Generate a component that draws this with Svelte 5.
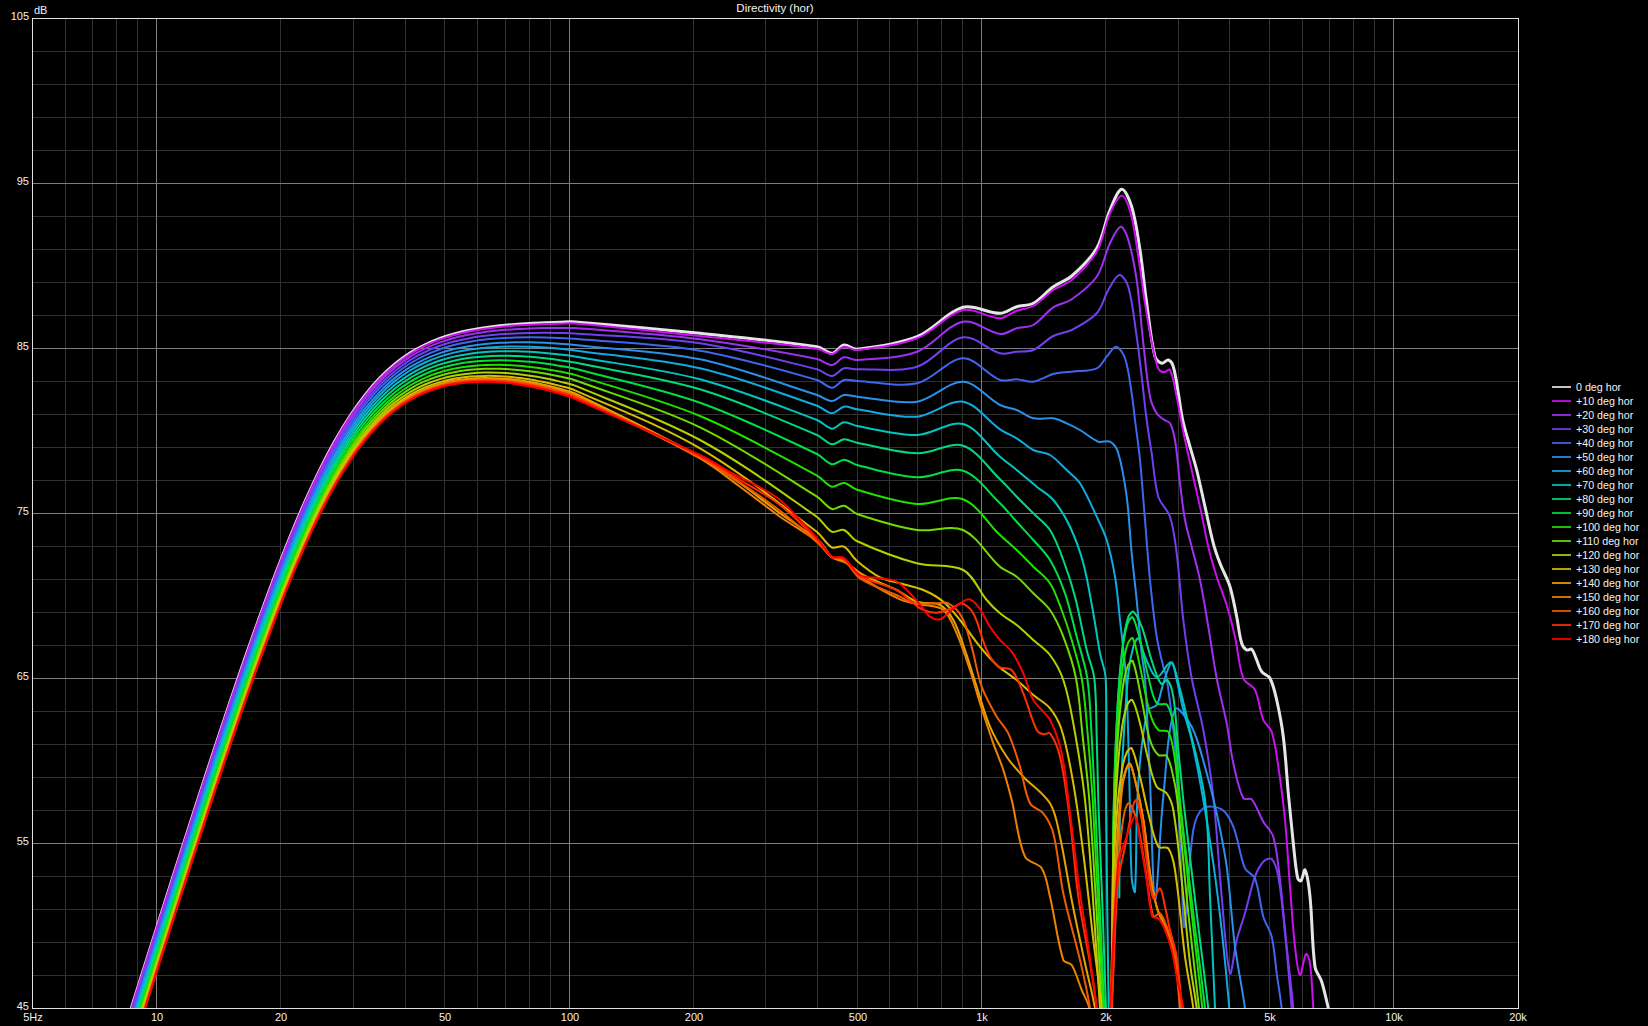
<script>
  // plot geometry, in page pixels
  const LEFT = 32, RIGHT = 1518, TOP = 18, BOTTOM = 1008;
  const fx = (f) => Math.round(156.3 + 412.3 * Math.log10(f / 10));
  const dy = (db) => Math.round(TOP + (105 - db) * 16.5);

  const majorF = [10, 100, 1000, 10000];
  const minorF = [6, 7, 8, 9, 20, 30, 40, 50, 60, 70, 80, 90, 200, 300, 400, 500, 600, 700, 800, 900,
    2000, 3000, 4000, 5000, 6000, 7000, 8000, 9000];
  const majorDb = [95, 85, 75, 65, 55];
  const minorDb = [];
  for (let d = 47; d < 105; d += 2) if (!majorDb.includes(d)) minorDb.push(d);

  const dbLabels = [105, 95, 85, 75, 65, 55, 45];
  const hzLabels = [[5, '5Hz'], [10, '10'], [20, '20'], [50, '50'], [100, '100'], [200, '200'], [500, '500'],
    [1000, '1k'], [2000, '2k'], [5000, '5k'], [10000, '10k'], [20000, '20k']];

  // the traces were read off enlarged crops, so each block is in crop units (3x from an origin)
  const crop = (x0, y0) => (...n) => {
    const out = [];
    for (let i = 0; i < n.length; i += 2) out.push([x0 + n[i] / 3, y0 + n[i + 1] / 3]);
    return out;
  };
  const z7 = crop(700, 300), z10 = crop(880, 570), z4 = crop(1000, 170), z5 = crop(1000, 420);
  const z6 = crop(1000, 680), z11 = crop(1090, 600);

  // shared bass slope (two cascaded 2nd order high-passes), the angles only shift it down
  const section = (xc, x) => Math.log10(1 + 10 ** ((4 * (xc - x)) / 412.3));
  const baseY = (x) => 321 + 165 * (section(363, x) + section(328, x));
  const spread = (x) => 44 + 10 * (Math.max(x - 130, 0) / 354) ** 5.2;
  const bass = (k) => {
    const out = [];
    for (let x = 110; x <= 575; x += 15) out.push([x, baseY(x) + k * spread(x)]);
    return out;
  };

  const cols = [700, 817, 832, 844, 857, 917, 963, 1000];
  const mid = (...ys) => ys.map((v, i) => [cols[i], 300 + v / 3]);

  // rising side of the lobe behind the 2 kHz null
  const lobe = (xp, yp) => {
    const xb = 1111.7;
    const steps = [[0, 0], [0.1, 0.52], [0.29, 0.78], [0.52, 0.92], [0.76, 0.985], [1, 1]];
    return [[xb - 1.5, 1060], ...steps.map(([a, t]) => [xb + a * (xp - xb), 1008 - t * (1008 - yp)])];
  };

  const traces = [
    { label: '0 deg hor', color: '#e6e6e6', width: 3, pts: [...bass(0),
      ...mid(100, 140, 160, 135, 148, 110, 22, 40),
      ...z4(50, 410, 100, 400, 160, 350, 215, 318, 290, 235, 330, 120, 365, 58, 395, 110, 420, 240, 440, 400, 465, 560, 485, 580, 505, 570, 520, 590, 535, 670),
      ...z5(548, 0, 570, 80, 590, 150, 615, 260, 640, 370, 660, 430, 690, 500, 710, 590, 725, 670, 740, 690, 755, 688, 770, 720, 785, 755, 810, 775),
      ...z6(830, 60, 850, 170, 865, 340, 880, 490, 893, 595, 903, 602, 915, 570, 930, 650, 945, 860, 965, 905, 985, 985, 1000, 1060)] },
    { label: '+10 deg hor', color: '#cc10f0', pts: [...bass(0.02),
      ...mid(108, 146, 162, 140, 150, 115, 30, 55),
      ...z4(50, 422, 100, 408, 160, 360, 215, 330, 290, 245, 330, 130, 365, 77, 392, 130, 415, 260, 435, 400, 460, 540, 475, 595, 490, 607, 510, 600, 530, 680),
      ...z5(543, 0, 555, 60, 575, 150, 600, 260, 625, 380, 650, 470, 680, 555, 705, 650, 730, 775),
      ...z6(765, 30, 790, 120, 815, 155, 835, 260, 855, 420, 870, 620, 885, 800, 900, 885, 918, 822, 930, 850, 940, 985, 945, 1060)] },
    { label: '+20 deg hor', color: '#a030f0', pts: [...bass(0.08),
      ...mid(118, 177, 195, 172, 180, 155, 65, 102),
      ...z4(50, 475, 100, 465, 160, 412, 215, 388, 290, 320, 330, 220, 362, 170, 385, 210, 410, 330, 430, 520, 450, 680, 470, 730, 490, 748),
      ...z5(510, 10, 525, 60, 540, 190, 555, 300, 575, 380, 600, 480, 625, 620, 650, 775),
      ...z6(680, 130, 700, 250, 730, 355, 755, 358, 790, 425, 820, 470, 840, 600, 860, 800, 880, 985, 885, 1060)] },
    { label: '+30 deg hor', color: '#7040f0', pts: [...bass(0.15),
      ...mid(130, 208, 228, 205, 208, 200, 112, 160),
      ...z4(50, 545, 100, 540, 160, 498, 215, 480, 290, 430, 325, 360, 358, 315, 385, 350, 410, 500, 425, 620, 440, 750),
      ...z5(455, 100, 475, 230, 510, 290, 530, 400, 550, 600, 575, 775),
      ...z6(610, 150, 640, 350, 665, 650, 690, 880, 710, 780, 735, 700, 765, 590, 790, 545, 815, 537, 835, 590, 855, 760, 875, 985, 880, 1060)] },
    { label: '+40 deg hor', color: '#3f66f0', pts: [...bass(0.22),
      ...mid(152, 240, 263, 240, 243, 250, 175, 240),
      ...z4(50, 628, 100, 635, 160, 612, 215, 605, 290, 595, 320, 560, 348, 530, 375, 565, 395, 670, 405, 750),
      ...z5(420, 120, 435, 300, 450, 480, 470, 650, 490, 740, 500, 775),
      ...z6(525, 200, 545, 600, 553, 740, 580, 450, 610, 385, 665, 388, 700, 440, 735, 565, 765, 595, 790, 710, 815, 770, 830, 880, 845, 985, 850, 1060)] },
    { label: '+50 deg hor', color: '#2a90ea', pts: [...bass(0.3),
      ...mid(178, 285, 303, 285, 290, 305, 245, 315),
      ...z4(50, 720, 100, 745, 160, 745, 200, 760),
      ...z5(240, 30, 295, 65, 330, 65, 355, 100, 380, 230, 395, 400, 410, 540, 425, 700, 435, 775),
      ...z6(450, 300, 465, 660, 490, 350, 525, 88, 575, 140, 615, 260, 650, 400, 680, 560, 705, 800, 735, 985, 740, 1060)] },
    { label: '+60 deg hor', color: '#10aade', pts: [...bass(0.37),
      ...mid(205, 317, 340, 320, 328, 350, 305, 388),
      ...z5(50, 55, 100, 90, 150, 105, 200, 150, 240, 190, 290, 290, 320, 360, 345, 470, 360, 600, 378, 775),
      ...z6(388, 300, 395, 595, 405, 635, 412, 360, 425, 200, 445, 90, 470, 75, 490, 10, 515, -53, 530, 0, 550, 90, 575, 180, 610, 360, 640, 550, 665, 750, 688, 985, 692, 1060)] },
    { label: '+70 deg hor', color: '#00c6c0', pts: [...bass(0.45),
      ...mid(238, 360, 386, 367, 378, 405, 372, 470),
      ...z5(50, 150, 110, 200, 160, 240, 210, 320, 250, 430, 280, 580, 300, 700, 317, 775),
      ...z6(318, 330, 322, 700, 326, 985, 330, 1060), null,
      ...z6(358, 655, 360, 400, 370, 190, 385, -20),
      ...z11(130, 140, 145, 115, 165, 170, 200, 232, 243, 187, 268, 260, 290, 350, 345, 600),
      ...z6(630, 650, 645, 985, 650, 1060)] },
    { label: '+80 deg hor', color: '#00da80', pts: [...bass(0.53),
      ...mid(268, 405, 433, 418, 428, 460, 437, 538),
      ...z5(50, 230, 100, 280, 150, 330, 190, 420, 225, 530, 260, 690, 283, 775),
      ...z6(290, 170, 295, 360, 308, 700, 318, 985, 322, 1060), null,
      ...lobe(1133.3, 611.7),
      ...z11(155, 80, 180, 165, 200, 225, 215, 252, 232, 240, 250, 290, 265, 450, 280, 600),
      ...z6(590, 700, 625, 985, 630, 1060)] },
    { label: '+90 deg hor', color: '#00e040', pts: [...bass(0.61),
      ...mid(308, 462, 493, 479, 495, 532, 512, 610),
      ...z5(50, 305, 100, 360, 150, 420, 195, 520, 230, 650, 262, 775),
      ...z6(275, 170, 285, 360, 300, 700, 313, 985, 318, 1060), null,
      ...lobe(1132.7, 617.3),
      ...z11(150, 120, 175, 230, 200, 310, 232, 315, 255, 400, 270, 600),
      ...z6(580, 700, 615, 985, 620, 1060)] },
    { label: '+100 deg hor', color: '#20e000', pts: [...bass(0.69),
      ...mid(348, 527, 560, 549, 569, 612, 598, 705),
      ...z5(50, 390, 100, 440, 150, 490, 185, 570, 215, 660, 245, 775),
      ...z6(262, 150, 278, 360, 296, 700, 310, 985, 314, 1060), null,
      ...lobe(1132.7, 638.3),
      ...z11(150, 200, 180, 340, 205, 390, 235, 395, 255, 480, 268, 600),
      ...z6(575, 700, 607, 985, 612, 1060)] },
    { label: '+110 deg hor', color: '#70dd00', pts: [...bass(0.76),
      ...mid(382, 590, 627, 617, 642, 690, 690, 800),
      ...z5(50, 470, 100, 520, 150, 570, 190, 650, 228, 775),
      ...z6(248, 170, 268, 360, 290, 700, 305, 985, 309, 1060), null,
      ...lobe(1132.7, 661),
      ...z11(155, 300, 180, 420, 205, 465, 230, 468, 250, 530, 262, 600),
      ...z6(565, 700, 597, 985, 602, 1060)] },
    { label: '+120 deg hor', color: '#b4d200', pts: [...bass(0.83),
      ...z7(0, 420, 350, 650, 395, 695, 432, 690, 470, 723, 650, 790, 790, 810, 860, 900),
      ...z5(0, 580, 50, 615, 100, 660, 150, 705),
      ...z6(190, 0, 220, 130, 255, 360, 282, 700, 300, 985, 304, 1060), null,
      ...lobe(1132.3, 700),
      ...z6(420, 130, 445, 240, 470, 320, 500, 340, 520, 390, 545, 600, 570, 850, 590, 985, 595, 1060)] },
    { label: '+130 deg hor', color: '#d8c000', pts: [...bass(0.89),
      ...z7(0, 445, 350, 695, 395, 742, 432, 740, 470, 782),
      ...z10(0, 22, 60, 40, 130, 60, 190, 95, 240, 150, 300, 230, 350, 285),
      ...z6(50, 0, 100, 45, 150, 85, 185, 150, 220, 310, 250, 520, 280, 780, 305, 985, 309, 1060), null,
      ...lobe(1131.7, 748.3),
      ...z6(420, 290, 445, 400, 475, 500, 505, 505, 525, 570, 555, 830, 580, 985, 585, 1060)] },
    { label: '+140 deg hor', color: '#e8a400', pts: [...bass(0.93),
      ...z7(0, 470, 120, 550, 240, 640, 360, 725, 395, 770, 435, 785, 490, 825),
      ...z10(50, 60, 110, 95, 180, 105, 220, 150, 255, 240, 290, 350, 330, 470, 380, 560, 430, 620),
      ...z6(150, 370, 180, 470, 215, 660, 255, 850, 285, 985, 290, 1060), null,
      ...z6(326, 1060, 330, 985, 345, 600, 365, 320, 388, 250, 405, 300, 430, 420, 450, 580, 470, 680, 495, 740, 525, 830, 545, 985, 550, 1060)] },
    { label: '+150 deg hor', color: '#f08200', pts: [...bass(0.95),
      ...z7(0, 475, 120, 560, 240, 650, 360, 730, 395, 772, 440, 790, 490, 835),
      ...z10(60, 88, 120, 103, 190, 120, 230, 190, 270, 300, 300, 400, 340, 520, 370, 600, 395, 690),
      ...z6(75, 530, 125, 565, 150, 650, 190, 840, 215, 855, 245, 930, 268, 985, 272, 1060), null,
      ...z6(328, 1060, 332, 985, 347, 600, 367, 322, 388, 253, 406, 303, 431, 425, 451, 585, 471, 685, 496, 745, 526, 835, 546, 985, 551, 1060)] },
    { label: '+160 deg hor', color: '#f05c00', pts: [...bass(0.97),
      ...z7(0, 472, 100, 535, 240, 632, 360, 735, 395, 772, 430, 778, 480, 835),
      ...z10(60, 80, 100, 100, 170, 100, 205, 100, 245, 140, 275, 230, 305, 350, 350, 440, 385, 490, 420, 590),
      ...z6(90, 370, 130, 400, 160, 460, 190, 640, 240, 840, 270, 985, 274, 1060), null,
      ...z6(330, 1060, 335, 985, 350, 650, 365, 450, 385, 370, 410, 420, 435, 560, 460, 710, 480, 700, 500, 740, 520, 800, 540, 985, 545, 1060)] },
    { label: '+170 deg hor', color: '#ff3000', pts: [...bass(0.98),
      ...z7(0, 468, 100, 528, 240, 615, 360, 728, 395, 771, 430, 776, 480, 828),
      ...z10(50, 60, 100, 100, 130, 120, 170, 128, 215, 115, 245, 100, 280, 130, 320, 240, 355, 290, 395, 300, 430, 370, 470, 480, 490, 493),
      ...z6(150, 160, 180, 230, 210, 420, 235, 650, 270, 850, 290, 985, 294, 1060), null,
      ...z6(330, 1060, 335, 985, 352, 620, 375, 500, 400, 375, 410, 360, 425, 420, 440, 540, 460, 655, 480, 625, 495, 680, 510, 750, 530, 830, 545, 985, 550, 1060)] },
    { label: '+180 deg hor', color: '#ff0000', pts: [...bass(1),
      ...z7(0, 465, 100, 522, 180, 562, 240, 600, 300, 660, 360, 725, 395, 770, 430, 773, 480, 825),
      ...z10(0, 25, 50, 35, 90, 70, 125, 110, 150, 140, 180, 148, 215, 120, 265, 88, 295, 110, 330, 170, 360, 210, 395, 245, 430, 310, 460, 390, 510, 450),
      ...z6(185, 220, 210, 400, 240, 640, 265, 800, 290, 985, 294, 1060), null,
      ...z6(326, 1060, 330, 985, 355, 550, 380, 470, 405, 410, 420, 480, 440, 600, 457, 710, 475, 715, 495, 750, 515, 810, 530, 890, 550, 985, 555, 1060)] }
  ];

  const dist = (p, q) => Math.hypot(q[0] - p[0], q[1] - p[1]) || 1;

  // slope at b, weighted by chord length so uneven point spacing can't loop back
  const tangent = (a, b, c) => {
    const len = dist(a, b) + dist(b, c);
    return [(c[0] - a[0]) / len, (c[1] - a[1]) / len];
  };

  // spline through the points, broken where a trace leaves the plot
  function toPath(pts) {
    const runs = [[]];
    for (const p of pts) {
      if (p === null) runs.push([]);
      else runs[runs.length - 1].push(p);
    }
    let d = '';
    for (const run of runs) {
      d += `M${run[0][0].toFixed(1)} ${run[0][1].toFixed(1)}`;
      for (let i = 0; i < run.length - 1; i++) {
        const a = run[Math.max(i - 1, 0)], b = run[i], c = run[i + 1], e = run[Math.min(i + 2, run.length - 1)];
        const h = dist(b, c) / 1.5;
        const t1 = tangent(a, b, c), t2 = tangent(b, c, e);
        const c1 = [b[0] + (t1[0] * h) / 2, b[1] + (t1[1] * h) / 2];
        const c2 = [c[0] - (t2[0] * h) / 2, c[1] - (t2[1] * h) / 2];
        d += `C${c1[0].toFixed(1)} ${c1[1].toFixed(1)} ${c2[0].toFixed(1)} ${c2[1].toFixed(1)} ${c[0].toFixed(1)} ${c[1].toFixed(1)}`;
      }
    }
    return d;
  }
</script>

<div class="page">
  <svg class="plot" width="1540" height="1026" viewBox="0 0 1540 1026">
    <defs>
      <clipPath id="plot-area">
        <rect x={LEFT} y={TOP} width={RIGHT - LEFT} height={BOTTOM - TOP} />
      </clipPath>
    </defs>

    <text class="title" x="775" y="12" text-anchor="middle">Directivity (hor)</text>
    <text class="axis" x="34" y="14">dB</text>

    <g class="grid">
      {#each minorDb as d}
        <line class="minor" x1={LEFT} x2={RIGHT} y1={dy(d) + 0.5} y2={dy(d) + 0.5} />
      {/each}
      {#each minorF as f}
        <line class="minor" x1={fx(f) + 0.5} x2={fx(f) + 0.5} y1={TOP} y2={BOTTOM} />
      {/each}
      {#each majorDb as d}
        <line class="major" x1={LEFT} x2={RIGHT} y1={dy(d) + 0.5} y2={dy(d) + 0.5} />
      {/each}
      {#each majorF as f}
        <line class="major" x1={fx(f) + 0.5} x2={fx(f) + 0.5} y1={TOP} y2={BOTTOM} />
      {/each}
      <rect class="frame" x={LEFT + 0.5} y={TOP + 0.5} width={RIGHT - LEFT} height={BOTTOM - TOP} />
    </g>

    {#each dbLabels as d}
      <text class="axis" x="29" y={dy(d) + 2} text-anchor="end">{d}</text>
    {/each}
    {#each hzLabels as [f, label]}
      <text class="axis" x={fx(f) + 1} y="1021" text-anchor="middle">{label}</text>
    {/each}

    <g clip-path="url(#plot-area)">
      {#each traces as t}
        <path class="trace" d={toPath(t.pts)} stroke={t.color} stroke-width={t.width ?? 2} />
      {/each}
    </g>
  </svg>

  <ul class="legend">
    {#each traces as t}
      <li>
        <span class="swatch" style="background:{t.color}"></span>
        {t.label}
      </li>
    {/each}
  </ul>
</div>

<style>
  :global(body) {
    background: #000;
  }

  .page {
    display: flex;
    align-items: center;
    width: 1648px;
    height: 1026px;
    background: #000;
    overflow: hidden;
    font-family: "Liberation Sans", Arial, sans-serif;
    font-size: 11px;
    color: #f2f2f2;
  }

  .plot {
    display: block;
    flex: none;
  }

  .title,
  .axis {
    fill: #f2f2f2;
    font-size: 11px;
  }

  .title {
    font-size: 11.5px;
  }

  .grid line {
    shape-rendering: crispEdges;
    stroke-width: 1;
  }

  .minor {
    stroke: #303030;
  }

  .major {
    stroke: #7c7c7c;
  }

  .frame {
    fill: none;
    stroke: #e0e0e0;
    stroke-width: 1;
    shape-rendering: crispEdges;
  }

  .trace {
    fill: none;
    stroke-linejoin: round;
  }

  .legend {
    list-style: none;
    margin: 0;
    padding: 0 0 0 12px;
    font-size: 10.7px;
  }

  .legend li {
    display: flex;
    align-items: center;
    gap: 2px;
    height: 14px;
    white-space: pre;
  }

  .swatch {
    width: 19px;
    height: 2px;
    flex: none;
    opacity: 0.85;
  }
</style>
